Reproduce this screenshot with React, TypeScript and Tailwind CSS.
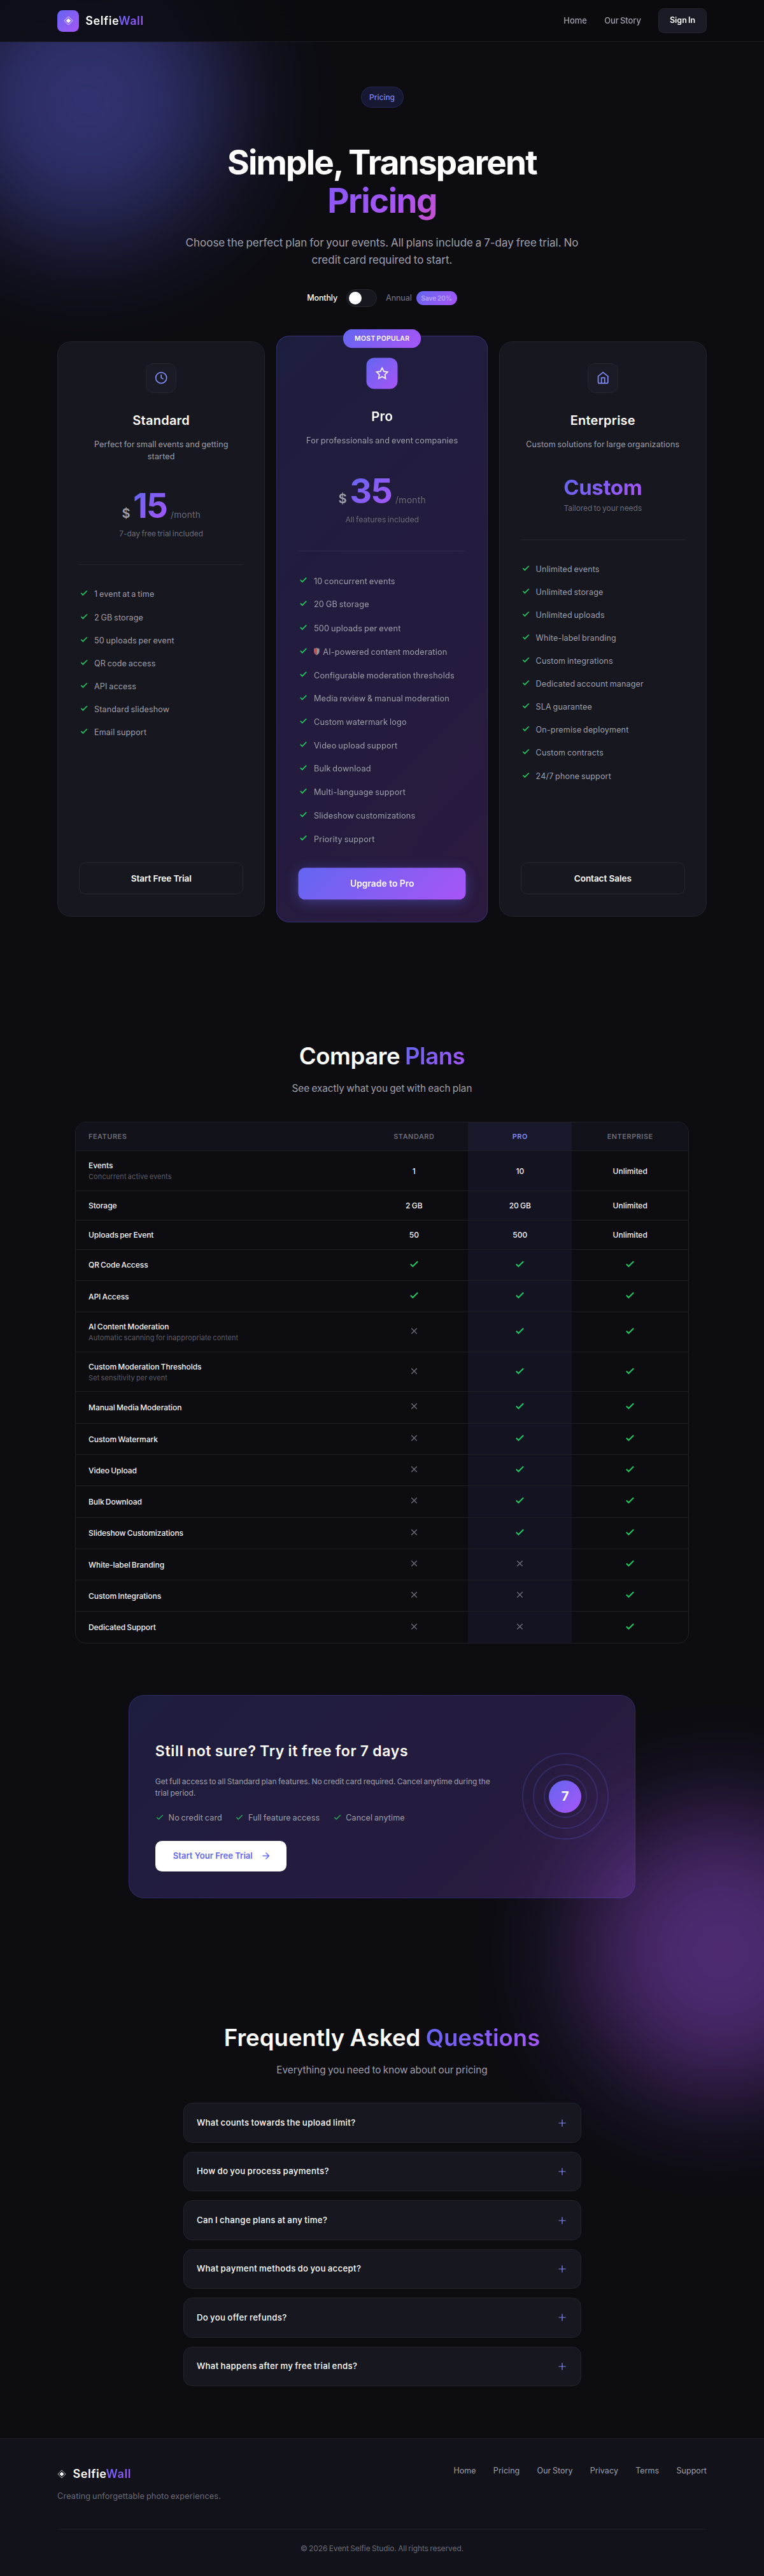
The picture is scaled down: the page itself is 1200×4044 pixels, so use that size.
import React from "react";

const GRAD = "bg-[linear-gradient(135deg,#6366f1,#a855f7)]";
const GRAD_TEXT = "bg-[linear-gradient(135deg,#6366f1,#a855f7)] bg-clip-text text-transparent";
const TINT = "bg-[linear-gradient(135deg,rgba(99,102,241,0.2),rgba(168,85,247,0.2))]";

function Check({ className, strokeWidth = 3 }: { className: string; strokeWidth?: number }) {
  return (
    <svg viewBox="0 0 24 24" fill="none" stroke="#22c55e" strokeWidth={strokeWidth} className={className}>
      <path d="M20 6L9 17l-5-5" />
    </svg>
  );
}

function Cross({ className }: { className: string }) {
  return (
    <svg viewBox="0 0 24 24" fill="none" stroke="#6b6b78" strokeWidth={2} className={className}>
      <path d="M18 6L6 18M6 6l12 12" />
    </svg>
  );
}

function Diamond({ className }: { className: string }) {
  return (
    <svg viewBox="0 0 16 16" className={className}>
      <path d="M8 1L15 8L8 15L1 8Z" fill="none" stroke="#fff" strokeWidth="0.8" />
      <path d="M8 4L12 8L8 12L4 8Z" fill="#fff" />
    </svg>
  );
}

function Shield() {
  return (
    <svg viewBox="0 0 18 24" className="mr-[5px] mt-[-2px] inline-block h-[12px] w-[9px]">
      <path d="M9 1C6 3 3 3.500 1 3.500V11C1 17 5 21 9 23Z" fill="#c2514a" stroke="#8d8790" strokeWidth="1.500" />
      <path d="M9 1C12 3 15 3.500 17 3.500V11C17 17 13 21 9 23Z" fill="#9a98a3" stroke="#6f6c78" strokeWidth="1.500" />
    </svg>
  );
}

const ICONS: Record<string, React.ReactNode> = {
  clock: (
    <>
      <circle cx="12" cy="12" r="10" />
      <path d="M12 6v6l4 2" />
    </>
  ),
  star: <path d="M12 2l3.090 6.260L22 9.270l-5 4.870 1.180 6.880L12 17.770l-6.180 3.250L7 14.140 2 9.270l6.910-1.010L12 2z" />,
  house: (
    <>
      <path d="M3 9l9-7 9 7v11a2 2 0 0 1-2 2H5a2 2 0 0 1-2-2z" />
      <path d="M9 22V12h6v10" />
    </>
  ),
};

type Plan = {
  name: string;
  desc: string;
  icon: string;
  price?: string;
  note: string;
  features: string[];
  cta: string;
  pro?: boolean;
};

const PLANS: Plan[] = [
  {
    name: "Standard",
    desc: "Perfect for small events and getting started",
    icon: "clock",
    price: "15",
    note: "7-day free trial included",
    features: ["1 event at a time", "2 GB storage", "50 uploads per event", "QR code access", "API access", "Standard slideshow", "Email support"],
    cta: "Start Free Trial",
  },
  {
    name: "Pro",
    desc: "For professionals and event companies",
    icon: "star",
    price: "35",
    note: "All features included",
    features: [
      "10 concurrent events",
      "20 GB storage",
      "500 uploads per event",
      "AI-powered content moderation",
      "Configurable moderation thresholds",
      "Media review & manual moderation",
      "Custom watermark logo",
      "Video upload support",
      "Bulk download",
      "Multi-language support",
      "Slideshow customizations",
      "Priority support",
    ],
    cta: "Upgrade to Pro",
    pro: true,
  },
  {
    name: "Enterprise",
    desc: "Custom solutions for large organizations",
    icon: "house",
    note: "Tailored to your needs",
    features: [
      "Unlimited events",
      "Unlimited storage",
      "Unlimited uploads",
      "White-label branding",
      "Custom integrations",
      "Dedicated account manager",
      "SLA guarantee",
      "On-premise deployment",
      "Custom contracts",
      "24/7 phone support",
    ],
    cta: "Contact Sales",
  },
];

function PlanCard({ plan }: { plan: Plan }) {
  const { pro } = plan;
  return (
    <div
      className={
        "relative flex h-[903px] flex-col rounded-[20.4px] border px-[33px] pb-[34px] pt-[33px] " +
        (pro ? "scale-[1.02] border-[rgba(99,102,241,0.3)] " + TINT : "border-[#24252c] bg-[#16171f]")
      }
    >
      {pro && (
        <div
          className={
            "absolute left-1/2 top-[-11px] flex h-[29px] w-[120px] -translate-x-1/2 items-center justify-center rounded-full text-[10.2px] font-semibold tracking-[0.035em] text-white " +
            GRAD
          }
        >
          MOST POPULAR
        </div>
      )}
      <div
        className={
          "mx-auto flex size-[47.6px] shrink-0 items-center justify-center rounded-[11.9px] " +
          (pro ? GRAD : "border border-[#26272f] bg-[#1a1b24]")
        }
      >
        <svg
          viewBox="0 0 24 24"
          fill="none"
          stroke={pro ? "#fff" : "#818cf8"}
          strokeWidth="2"
          className="size-[20.4px]"
        >
          {ICONS[plan.icon]}
        </svg>
      </div>
      <h3 className="mt-[26.500px] text-center text-[20px] font-semibold leading-[33px] tracking-[0.012em] text-white">{plan.name}</h3>
      <p className="mx-auto mt-[11px] w-[248px] text-center text-[12.500px] leading-[19.400px] tracking-[0.013em] text-[#a0a0ab]">{plan.desc}</p>
      {plan.price ? (
        <div className="mt-[40px] flex h-[54.400px] items-baseline justify-center leading-[54.400px]">
          <span className="text-[20px] font-semibold text-[#a0a0ab]">$</span>
          <span className={"ml-[4.500px] text-[53px] font-bold tracking-[-0.035em] " + GRAD_TEXT}>{plan.price}</span>
          <span className="ml-[6px] text-[13.600px] tracking-[0.018em] text-[#6b6b78]">/month</span>
        </div>
      ) : (
        <div className="mt-[41px] flex h-[33px] justify-center text-[33px] font-bold leading-[34px] tracking-[-0.012em]">
          <span className={GRAD_TEXT}>Custom</span>
        </div>
      )}
      <p className="mt-[7px] text-center text-[12px] leading-[19px] tracking-[-0.003em] text-[#6b6b78]">{plan.note}</p>
      <div className={"mt-[39.500px] border-t " + (pro ? "border-white/[0.08]" : "border-[#26272e]")} />
      <ul className="mt-[36px] flex flex-col gap-[16.100px]">
        {plan.features.map((f, i) => (
          <li key={f} className="flex items-center text-[12.500px] leading-5 tracking-[0.014em] text-[#a0a0ab]">
            <Check className="mb-[4px] ml-[1px] mr-[9px] size-[14px] shrink-0" />
            <span>
              {pro && i === 3 && <Shield />}
              {f}
            </span>
          </li>
        ))}
      </ul>
      <button
        className={
          "mt-auto flex h-[49.500px] items-center justify-center rounded-[10.200px] text-[13.600px] font-semibold text-white " +
          (pro ? "tracking-[0px] shadow-[0_4px_20px_rgba(99,102,241,0.4)] " + GRAD : "border border-[#26272f] tracking-[-0.006em]")
        }
      >
        {plan.cta}
      </button>
    </div>
  );
}

type Row = { label: string; sub?: string; cells: (string | boolean)[] };

const ROWS: Row[] = [
  { label: "Events", sub: "Concurrent active events", cells: ["1", "10", "Unlimited"] },
  { label: "Storage", cells: ["2 GB", "20 GB", "Unlimited"] },
  { label: "Uploads per Event", cells: ["50", "500", "Unlimited"] },
  { label: "QR Code Access", cells: [true, true, true] },
  { label: "API Access", cells: [true, true, true] },
  { label: "AI Content Moderation", sub: "Automatic scanning for inappropriate content", cells: [false, true, true] },
  { label: "Custom Moderation Thresholds", sub: "Set sensitivity per event", cells: [false, true, true] },
  { label: "Manual Media Moderation", cells: [false, true, true] },
  { label: "Custom Watermark", cells: [false, true, true] },
  { label: "Video Upload", cells: [false, true, true] },
  { label: "Bulk Download", cells: [false, true, true] },
  { label: "Slideshow Customizations", cells: [false, true, true] },
  { label: "White-label Branding", cells: [false, false, true] },
  { label: "Custom Integrations", cells: [false, false, true] },
  { label: "Dedicated Support", cells: [false, false, true] },
];

function CompareTable() {
  const cols = "grid grid-cols-[446.500px_169.700px_163.200px_1fr]";
  return (
    <div className="mx-auto mt-[39.800px] w-[964px] overflow-hidden rounded-[17px] border border-[#212229]">
      <div className={cols + " h-[45.500px] border-b border-[#1e1f25] bg-[#12131a] text-[10.900px] font-semibold tracking-[0.050em] text-[#6b6b78]"}>
        <div className="flex items-center pl-[20px]">FEATURES</div>
        <div className="flex items-center justify-center">STANDARD</div>
        <div className="flex items-center justify-center bg-[rgba(99,102,241,0.08)] text-[#818cf8]">PRO</div>
        <div className="flex items-center justify-center">ENTERPRISE</div>
      </div>
      {ROWS.map((r, i) => {
        const last = i === ROWS.length - 1;
        const h = last ? "h-[48.300px]" : r.sub ? "h-[62.600px]" : typeof r.cells[0] === "string" ? "h-[45.800px]" : "h-[49.300px]";
        return (
          <div key={r.label} className={cols + " " + h + (last ? "" : " border-b border-[#1e1f25]")}>
            <div className="flex flex-col justify-center pl-[20px] pt-[1.500px]">
              <div className="text-[12px] font-medium leading-[18px] tracking-[-0.004em] text-[#f4f4f6]">{r.label}</div>
              {r.sub && <div className="text-[11px] leading-[17px] tracking-[0.008em] text-[#5c5c67]">{r.sub}</div>}
            </div>
            {r.cells.map((c, j) => (
              <div
                key={j}
                className={
                  "flex items-center justify-center pt-[1px] text-[12px] font-medium text-[#f4f4f6] " +
                  (j === 1 ? "bg-[rgba(99,102,241,0.08)]" : "")
                }
              >
                {typeof c === "string" ? c : c ? <Check className="mb-[4px] size-[17px]" /> : <Cross className="mb-[4px] size-[17px]" />}
              </div>
            ))}
          </div>
        );
      })}
    </div>
  );
}

function TrialBanner() {
  return (
    <section className={"mx-auto mt-[81px] flex h-[319.300px] w-[796px] rounded-[24px] border border-[rgba(99,102,241,0.22)] pl-[40.800px] " + TINT}>
      <div className="w-[560px] pt-[70px]">
        <h2 className="text-[23px] font-semibold leading-[34px] tracking-[0.030em] text-white">Still not sure? Try it free for 7 days</h2>
        <p className="mt-[22px] w-[545px] text-[12px] leading-[18px] text-[#a0a0ab]">
          Get full access to all Standard plan features. No credit card required. Cancel anytime during the trial period.
        </p>
        <div className="mt-[20px] flex gap-[20.400px] text-[12.500px] leading-5 tracking-[0.012em] text-[#a0a0ab]">
          {["No credit card", "Full feature access", "Cancel anytime"].map((t) => (
            <div key={t} className="flex items-center gap-[6.800px]">
              <Check strokeWidth={2} className="mb-[2px] size-[14px]" />
              {t}
            </div>
          ))}
        </div>
        <button className="mt-[26px] flex h-[48px] w-[206px] items-center rounded-[10.200px] bg-white pl-[28px] text-[13px] font-semibold tracking-[0.002em] text-[#6366f1]">
          Start Your Free Trial
          <svg viewBox="0 0 24 24" fill="none" stroke="currentColor" strokeWidth="2" className="ml-[12px] size-[17px]">
            <path d="M5 12h14M12 5l7 7-7 7" />
          </svg>
        </button>
      </div>
      <div className="my-auto ml-[16px] flex size-[136px] items-center justify-center rounded-full border-2 border-[rgba(99,102,241,0.22)]">
        <div className="flex size-[102px] items-center justify-center rounded-full border-2 border-[rgba(99,102,241,0.22)]">
          <div className="flex size-[68px] items-center justify-center rounded-full border-2 border-[rgba(99,102,241,0.22)]">
            <div className={"flex size-[51px] shrink-0 items-center justify-center rounded-full text-[20.400px] font-bold text-white " + GRAD}>7</div>
          </div>
        </div>
      </div>
    </section>
  );
}

const QUESTIONS = [
  "What counts towards the upload limit?",
  "How do you process payments?",
  "Can I change plans at any time?",
  "What payment methods do you accept?",
  "Do you offer refunds?",
  "What happens after my free trial ends?",
];

export default function App() {
  return (
    <div className="relative h-[4044px] w-[1200px] overflow-hidden bg-[#0c0c11] font-['Inter','Liberation_Sans',sans-serif] [word-spacing:-0.06em]">
      <div className="absolute left-[-82px] top-[-62px] size-[440px] rounded-full bg-[#6366f1] opacity-[0.42] blur-[85px]" />
      <div className="absolute left-[913px] top-[2843px] size-[440px] rounded-full bg-[#a855f7] opacity-[0.42] blur-[85px]" />

      <div className="relative">
        <header className="flex h-[66px] items-center border-b border-[#1c1d24] bg-[rgba(10,10,15,0.85)] px-[90px] backdrop-blur-[20px]">
          <div className={"flex size-[34px] items-center justify-center rounded-[8.500px] " + GRAD}>
            <Diamond className="size-[15px]" />
          </div>
          <div className="ml-[10.200px] text-[18px] font-semibold tracking-[0.032em] text-white">
            Selfie<span className={GRAD_TEXT}>Wall</span>
          </div>
          <nav className="ml-auto flex items-center text-[13px] font-medium text-[#a0a0ab]">
            <a>Home</a>
            <a className="ml-[27.200px] tracking-[-0.008em]">Our Story</a>
            <a className="ml-[27.200px] flex h-[39px] w-[76px] items-center justify-center rounded-[8.500px] border border-[#26272f] bg-[#1a1b24] text-[12.500px] font-semibold text-white">
              Sign In
            </a>
          </nav>
        </header>

        <section className="flex flex-col items-center pt-[70px] text-center">
          <div className="flex h-[33px] w-[67px] items-center justify-center rounded-full border border-[rgba(99,102,241,0.2)] bg-[#171831] text-[12px] font-medium text-[#7c86ef]">
            Pricing
          </div>
          <h1 className="mt-[57px] text-[53px] font-bold leading-[59.840px] tracking-[-0.034em] text-white">
            Simple, Transparent
            <br />
            <span className="bg-[linear-gradient(135deg,#8458f4,#a855f7_60%,#c94fcb)] bg-clip-text tracking-[-0.030em] text-transparent">Pricing</span>
          </h1>
          <p className="mt-[22px] w-[640px] text-[17px] leading-[27.200px] text-[#a0a0ab]">
            Choose the perfect plan for your events. All plans include a 7-day free trial. No credit card required to start.
          </p>
          <div className="mt-[32px] flex h-[28px] items-center text-[12.500px] font-medium tracking-[-0.012em]">
            <span className="text-white">Monthly</span>
            <span className="ml-[14px] flex h-[28px] w-[48px] items-center rounded-full border border-[#26272f] bg-[#16171f] pl-[3px]">
              <span className="size-[20px] rounded-full bg-white" />
            </span>
            <span className="ml-[14px] text-[#6b6b78]">Annual</span>
            <span className={"ml-[7px] flex h-[22.500px] w-[64px] items-center justify-center rounded-full text-[10px] font-semibold tracking-[0.006em] text-[#b6a4fb] " + GRAD}>
              Save 20%
            </span>
          </div>
        </section>

        <section className="mx-[90px] mt-[53.600px] grid grid-cols-3 gap-[20.400px]">
          {PLANS.map((p) => (
            <PlanCard key={p.name} plan={p} />
          ))}
        </section>

        <section>
          <h2 className="mt-[197.400px] text-center text-[36.500px] font-semibold leading-[44px] tracking-[-0.012em] text-white">
            Compare <span className={GRAD_TEXT}>Plans</span>
          </h2>
          <p className="mt-[17px] text-center text-[15.300px] leading-6 tracking-[-0.002em] text-[#a0a0ab]">
            See exactly what you get with each plan
          </p>
          <CompareTable />
        </section>

        <TrialBanner />

        <section>
          <h2 className="mt-[196.500px] text-center text-[36.500px] font-semibold leading-[44px] tracking-[0.001em] text-white">
            Frequently Asked <span className={GRAD_TEXT}>Questions</span>
          </h2>
          <p className="mt-[17px] text-center text-[15.300px] leading-6 text-[#a0a0ab]">Everything you need to know about our pricing</p>
          <div className="mx-auto mt-[39.600px] flex w-[625px] flex-col gap-[13.600px]">
            {QUESTIONS.map((q) => (
              <div key={q} className="flex h-[62.900px] items-center justify-between rounded-[13.600px] border border-[#24252c] bg-[#16171f] pl-[20.400px] pr-[23px]">
                <span className="text-[13.200px] font-medium tracking-[0.028em] text-white">{q}</span>
                <svg viewBox="0 0 12 12" stroke="#818cf8" strokeWidth="1.200" className="size-[12px]">
                  <path d="M6 0.500v11M0.500 6h11" />
                </svg>
              </div>
            ))}
          </div>
        </section>

        <footer className="mt-[82px] h-[220px] border-t border-[#212229] bg-[#12131a] px-[90px] pt-[40px]">
          <div className="flex justify-between">
            <div>
              <div className="flex items-center text-[18px] font-semibold leading-[30px] tracking-[0.032em] text-white">
                <Diamond className="mr-[10.500px] size-[14px]" />
                <span>
                  Selfie<span className={GRAD_TEXT}>Wall</span>
                </span>
              </div>
              <p className="mt-[10px] text-[12.750px] leading-5 tracking-[0.010em] text-[#6b6b78]">Creating unforgettable photo experiences.</p>
            </div>
            <nav className="flex gap-[27.200px] text-[12.500px] leading-5 tracking-[0.004em] text-[#a0a0ab]">
              {["Home", "Pricing", "Our Story", "Privacy", "Terms", "Support"].map((l) => (
                <a key={l}>{l}</a>
              ))}
            </nav>
          </div>
          <div className="mt-[41px] border-t border-[#212229] pt-[20px] text-center text-[11.900px] leading-5 tracking-[-0.004em] text-[#6b6b78]">
            © 2026 Event Selfie Studio. All rights reserved.
          </div>
        </footer>
      </div>
    </div>
  );
}
